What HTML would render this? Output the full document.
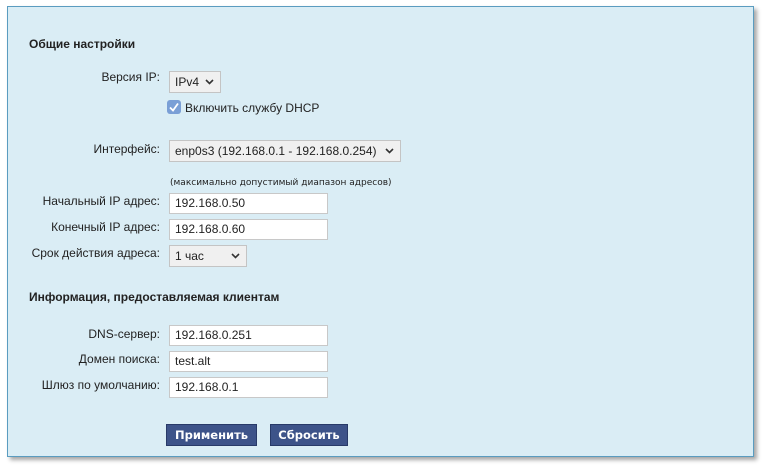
<!DOCTYPE html>
<html><head><meta charset="utf-8"><style>
body{margin:0;width:766px;height:470px;background:#fff;position:relative;overflow:hidden;font-family:"Liberation Sans","DejaVu Sans",sans-serif;font-size:12px;color:#222}
.panel{position:absolute;left:7px;top:6px;width:745px;height:449px;background:#daedf5;border:1px solid #5a9cc0;box-shadow:3px 3px 4px rgba(0,0,0,.35)}
.a{position:absolute;white-space:nowrap}
.h{font-weight:bold;left:29px}
.l{right:606px;text-align:right}
.in{position:absolute;left:169px;background:#fff;border:1px solid #c8c8c8;line-height:19px;padding-left:5px;box-sizing:border-box;width:159px;height:21px}
.sel{position:absolute;left:169px;height:22px;background:#f0f0f0;border:1px solid #c4c4c4;box-sizing:border-box;line-height:20px;padding-left:5px}
.sel svg{position:absolute;right:6px;top:7px}
.btn{position:absolute;top:424px;height:22px;background:#3d5389;border:1px solid #283a68;color:#fff;font-weight:bold;font-family:"DejaVu Sans",sans-serif;font-size:11.5px;line-height:21px;text-align:center;box-sizing:border-box}
</style></head><body>
<div class="panel"></div>
<div class="a h" style="top:37px">Общие настройки</div>
<div class="a l" style="top:70px">Версия IP:</div>
<div class="sel" style="top:71px;width:52px">IPv4<svg width="9" height="6"><path d="M1 1L4.5 4.5L8 1" stroke="#333" stroke-width="1.6" fill="none"/></svg></div>
<div class="a" style="left:167px;top:100px;width:14px;height:14px;background:#7a9fd6;border-radius:3px"><svg width="14" height="14"><path d="M3 7.5L6 10.5L11 3.5" stroke="#fff" stroke-width="1.8" fill="none"/></svg></div>
<div class="a" style="left:185px;top:101px">Включить службу DHCP</div>
<div class="a l" style="top:142px">Интерфейс:</div>
<div class="sel" style="top:140px;width:232px">enp0s3 (192.168.0.1 - 192.168.0.254)<svg width="9" height="6"><path d="M1 1L4.5 4.5L8 1" stroke="#333" stroke-width="1.6" fill="none"/></svg></div>
<div class="a" style="left:170px;top:178px;font-size:9px;font-family:'DejaVu Sans',sans-serif">(максимально допустимый диапазон адресов)</div>
<div class="a l" style="top:194px">Начальный IP адрес:</div>
<div class="in" style="top:193px">192.168.0.50</div>
<div class="a l" style="top:220px">Конечный IP адрес:</div>
<div class="in" style="top:219px">192.168.0.60</div>
<div class="a l" style="top:246px">Срок действия адреса:</div>
<div class="sel" style="top:245px;width:78px">1 час<svg width="9" height="6"><path d="M1 1L4.5 4.5L8 1" stroke="#333" stroke-width="1.6" fill="none"/></svg></div>
<div class="a h" style="top:290px">Информация, предоставляемая клиентам</div>
<div class="a l" style="top:327px">DNS-сервер:</div>
<div class="in" style="top:325px">192.168.0.251</div>
<div class="a l" style="top:352px">Домен поиска:</div>
<div class="in" style="top:351px">test.alt</div>
<div class="a l" style="top:378px">Шлюз по умолчанию:</div>
<div class="in" style="top:377px">192.168.0.1</div>
<div class="btn" style="left:166px;width:91px">Применить</div>
<div class="btn" style="left:270px;width:78px">Сбросить</div>
</body></html>
